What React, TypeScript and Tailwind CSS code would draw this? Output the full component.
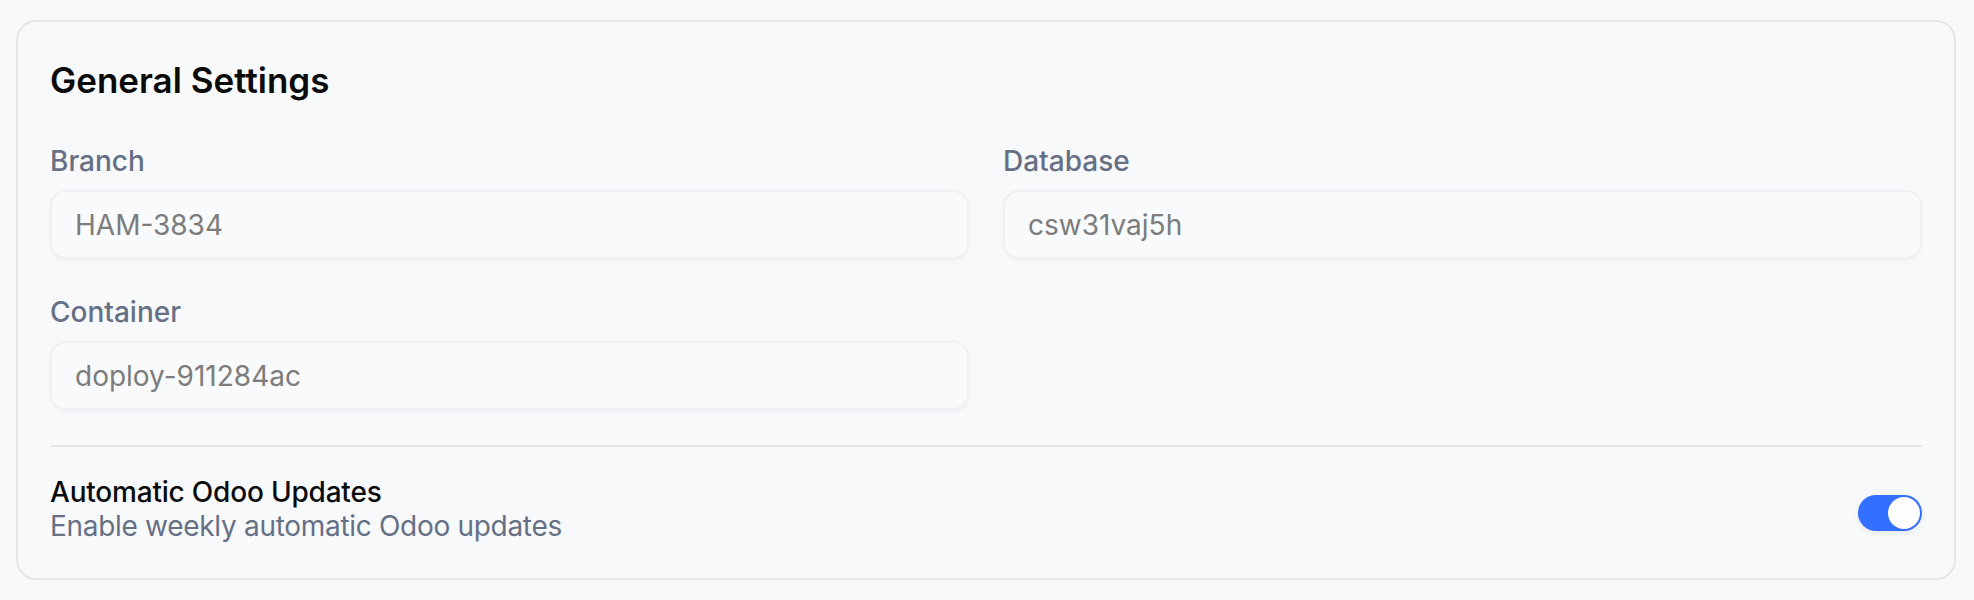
import { useState } from "react";

function Field({ label, value }: { label: string; value: string }) {
  return (
    <div className="flex flex-col">
      <label className="mb-[9px] text-[28px] leading-[40px] font-medium text-[#667085]">{label}</label>
      <div className="flex h-[69px] items-center rounded-[16px] border-2 border-[#eef0f3] bg-[#f9fafb] px-[23px] text-[28px] leading-[40px] text-[#7c7c7c] shadow-[0_2px_4px_rgba(16,24,40,0.04)]">
        {value}
      </div>
    </div>
  );
}

function Toggle({ on, onChange }: { on: boolean; onChange: (v: boolean) => void }) {
  return (
    <button
      type="button"
      onClick={() => onChange(!on)}
      className={`mt-[7px] flex h-[36px] w-[64px] shrink-0 items-center rounded-full p-[2px] shadow-[0_2px_6px_rgba(0,0,0,0.08)] ${on ? "bg-[#3370ff] justify-end" : "bg-[#d1d5db] justify-start"}`}
    >
      <span className="h-[32px] w-[32px] rounded-full bg-white" />
    </button>
  );
}

export default function App() {
  const [auto, setAuto] = useState(true);

  return (
    <div className="min-h-screen bg-[#f8f9fb] pl-4 pr-[18px] pt-5 font-['Inter','Noto_Sans',sans-serif]">
      <div className="rounded-[20px] border-2 border-[#e4e6e9] bg-[#f8f9fb] px-8 pt-8 pb-[35px]">
        <h2 className="text-[35px] leading-[52px] font-semibold text-[#0b0b0b]">General Settings</h2>

        <div className="mt-[35px] grid grid-cols-2 gap-x-[34px] gap-y-[33px]">
          <Field label="Branch" value="HAM-3834" />
          <Field label="Database" value="csw31vaj5h" />
          <Field label="Container" value="doploy-911284ac" />
        </div>

        <div className="mt-[35px] border-t-2 border-[#e4e6e9] pt-[28px]">
          <div className="flex items-center justify-between">
            <div className="flex flex-col">
              <span className="text-[28px] leading-[34px] font-medium tracking-[-0.2px] text-[#0b0b0b]">Automatic Odoo Updates</span>
              <span className="text-[28px] leading-[34px] tracking-[-0.3px] text-[#667085]">Enable weekly automatic Odoo updates</span>
            </div>
            <Toggle on={auto} onChange={setAuto} />
          </div>
        </div>
      </div>
    </div>
  );
}
